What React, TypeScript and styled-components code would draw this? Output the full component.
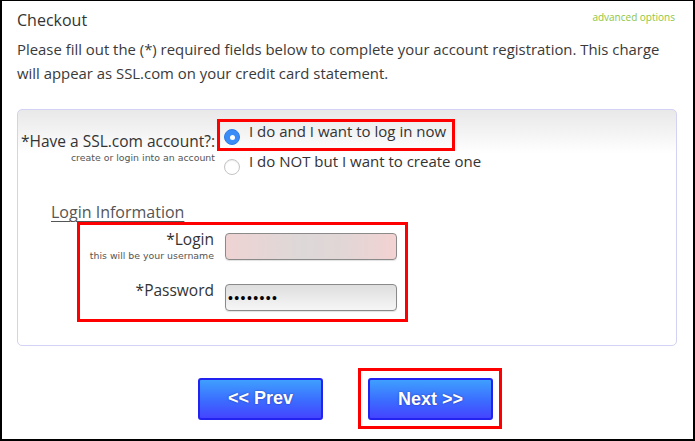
import React from "react";
import styled, {createGlobalStyle} from "styled-components";

const GlobalStyle = createGlobalStyle`
  html, body {
    margin: 0;
    padding: 0;
    background: #fff;
  }
  * {
    box-sizing: border-box;
  }
`;

const Frame = styled.div`
  width: 695px;
  height: 441px;
  border-top: 1px solid #000;
  border-left: 2px solid #000;
  border-right: 2px solid #000;
  border-bottom: 2px solid #000;
  font-family: "Open Sans", "DejaVu Sans", sans-serif;
  color: #333;
  padding: 0 10px 0 15px;
  display: flex;
  flex-direction: column;
  overflow: hidden;
`;

const Header = styled.div`
  display: flex;
  justify-content: space-between;
  align-items: flex-start;
  padding-top: 8px;
  flex: none;
`;

const Title = styled.h1`
  margin: 0;
  font-size: 16px;
  line-height: 22px;
  font-weight: 400;
  color: #333;
`;

const Advanced = styled.a`
  font-size: 10px;
  line-height: 14px;
  color: #8cc63f;
  text-decoration: none;
  margin-right: 8px;
  padding-top: 1px;
`;

const Intro = styled.p`
  margin: 6px 0 0;
  font-size: 14.9px;
  line-height: 24px;
  color: #3a3a3a;
  flex: none;
`;

const Fieldset = styled.div`
  flex: none;
  margin-top: 24px;
  width: 660px;
  height: 237px;
  border: 1px solid #d2d2f4;
  border-radius: 5px;
  background: linear-gradient(#e8e8e8, #fff 44px);
  padding-top: 9px;
`;

const Row = styled.div`
  display: grid;
  grid-template-columns: 197px 1fr;
  column-gap: 2px;
  align-items: start;
`;

const LabelCol = styled.div<{$top?: number}>`
  display: flex;
  flex-direction: column;
  align-items: flex-end;
  text-align: right;
  margin-top: ${p => p.$top ?? 0}px;
`;

const Label = styled.span`
  font-size: 15.5px;
  line-height: 20px;
  color: #333;
  white-space: nowrap;
`;

const Hint = styled.span<{$gap?: number}>`
  font-family: "DejaVu Sans", sans-serif;
  font-size: 9.4px;
  line-height: 11px;
  margin-top: ${p => p.$gap ?? 0}px;
  color: #555;
  white-space: nowrap;
`;

const Choices = styled.div`
  display: flex;
  flex-direction: column;
  align-items: flex-start;
`;

const Choice = styled.label<{$marked?: boolean}>`
  display: flex;
  align-items: flex-start;
  gap: 9px;
  height: 32px;
  padding: 0 6px 0 4px;
  margin-top: ${p => (p.$marked ? "0" : "-2px")};
  border: 3px solid ${p => (p.$marked ? "#f00" : "transparent")};
  font-size: 15px;
  line-height: 18px;
  color: #333;
  white-space: nowrap;
`;

const Radio = styled.span<{$on?: boolean}>`
  width: 16px;
  height: 16px;
  border-radius: 50%;
  margin-top: 7px;
  flex: none;
  background: ${p => (p.$on ? "#3a8cf6" : "#fff")};
  border: 1px solid ${p => (p.$on ? "#2f7ce8" : "#c4c4c4")};
  box-shadow: ${p => (p.$on ? "none" : "inset 0 1px 1px rgba(0,0,0,0.08)")};
  display: flex;
  align-items: center;
  justify-content: center;
  &::after {
    content: "";
    width: 5px;
    height: 5px;
    border-radius: 50%;
    background: #fff;
    display: ${p => (p.$on ? "block" : "none")};
  }
`;

const Section = styled.div`
  margin: 21px 0 0 33px;
  font-size: 16px;
  line-height: 20px;
  color: #555;
  text-decoration: underline;
  text-underline-offset: 3px;
  text-decoration-thickness: 1px;
`;

const LoginBox = styled.div`
  margin-left: 59px;
  width: 331px;
  height: 100px;
  border: 3px solid #f00;
  padding-top: 8px;
  display: flex;
  flex-direction: column;
  gap: 23px;
`;

const FieldRow = styled.div`
  display: grid;
  grid-template-columns: 134px 172px;
  column-gap: 11px;
  align-items: start;
`;

const Input = styled.div<{$blur?: boolean}>`
  height: 27px;
  border: 1px solid #8a8a8a;
  border-radius: 4px;
  box-shadow: 0 1px 1px rgba(0, 0, 0, 0.12);
  background: ${p =>
    p.$blur
      ? "linear-gradient(90deg, #efd3d3, #ddd8d8 45%, #e2d6d6 70%, #f3d2d2)"
      : "linear-gradient(#dedede, #f6f6f6)"};
  font-family: "Liberation Sans", Arial, sans-serif;
  font-size: 14px;
  line-height: 27px;
  letter-spacing: 1.4px;
  padding-left: 2px;
  color: #000;
`;

const Buttons = styled.div`
  flex: none;
  display: flex;
  align-items: center;
  gap: 35px;
  margin-top: 22px;
  padding-left: 181px;
`;

const Highlight = styled.div<{$on?: boolean}>`
  padding: 7px 6px 6px 7px;
  border: 3px solid ${p => (p.$on ? "#f00" : "transparent")};
`;

const Btn = styled.button`
  width: 125px;
  height: 42px;
  border: 2px solid #2323f0;
  border-radius: 3px;
  background: linear-gradient(#3fa0ff, #3b70ff 50%, #4444ff);
  color: #fff;
  font-family: "Liberation Sans", Arial, sans-serif;
  font-weight: 700;
  font-size: 18px;
  text-shadow: 0 0 2px rgba(0, 0, 90, 0.55);
  cursor: pointer;
  padding: 0;
`;

export default function App() {
  return (
    <>
      <GlobalStyle />
      <Frame>
        <Header>
          <Title>Checkout</Title>
          <Advanced href="#">advanced options</Advanced>
        </Header>
        <Intro>
          Please fill out the (*) required fields below to complete your account registration. This
          charge will appear as SSL.com on your credit card statement.
        </Intro>
        <Fieldset>
          <Row>
            <LabelCol $top={12}>
              <Label>*Have a SSL.com account?:</Label>
              <Hint $gap={1}>create or login into an account</Hint>
            </LabelCol>
            <Choices>
              <Choice $marked>
                <Radio $on />I do and I want to log in now
              </Choice>
              <Choice>
                <Radio />I do NOT but I want to create one
              </Choice>
            </Choices>
          </Row>
          <Section>Login Information</Section>
          <LoginBox>
            <FieldRow>
              <LabelCol $top={-4}>
                <Label>*Login</Label>
                <Hint $gap={1}>this will be your username</Hint>
              </LabelCol>
              <Input $blur />
            </FieldRow>
            <FieldRow>
              <LabelCol $top={-4}>
                <Label>*Password</Label>
              </LabelCol>
              <Input>••••••••</Input>
            </FieldRow>
          </LoginBox>
        </Fieldset>
        <Buttons>
          <Btn>&lt;&lt; Prev</Btn>
          <Highlight $on>
            <Btn>Next &gt;&gt;</Btn>
          </Highlight>
        </Buttons>
      </Frame>
    </>
  );
}
